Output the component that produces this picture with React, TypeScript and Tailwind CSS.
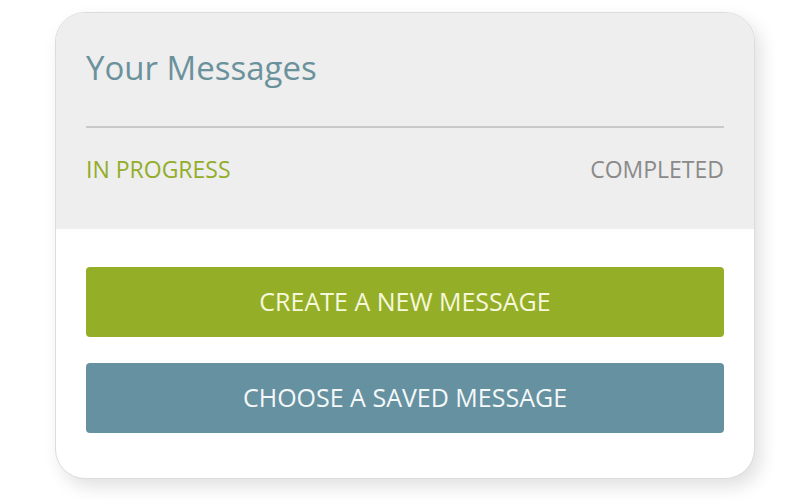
export default function App() {
  return (
    <div
      className="w-[800px] h-[500px] bg-white pt-[12px] pl-[55px]"
      style={{ fontFamily: '"Open Sans", "Liberation Sans", sans-serif' }}
    >
      <div className="w-[700px] h-[467px] rounded-[30px] bg-white border border-[#dcdcdc] shadow-[6px_8px_18px_rgba(0,0,0,0.12)] overflow-hidden flex flex-col">
        <div className="h-[216px] bg-[#eeeeee] px-[30px] pt-[35px] flex flex-col">
          <h1 className="text-[33px] leading-[40px] text-[#6b929c]">
            Your Messages
          </h1>
          <div className="mt-[38px] h-[2px] bg-[#c9c9c9]" />
          <div className="mt-[26px] flex justify-between text-[23px] leading-[30px]">
            <span className="text-[#93ad28]">IN PROGRESS</span>
            <span className="text-[#8a8a8a]">COMPLETED</span>
          </div>
        </div>
        <div className="px-[30px] pt-[38px] flex flex-col gap-[26px]">
          <button className="h-[70px] rounded-[4px] bg-[#94ae28] text-[#f6f8dc] text-[25px]">
            CREATE A NEW MESSAGE
          </button>
          <button className="h-[70px] rounded-[4px] bg-[#6691a0] text-[#f4f8f9] text-[25px]">
            CHOOSE A SAVED MESSAGE
          </button>
        </div>
      </div>
    </div>
  );
}
